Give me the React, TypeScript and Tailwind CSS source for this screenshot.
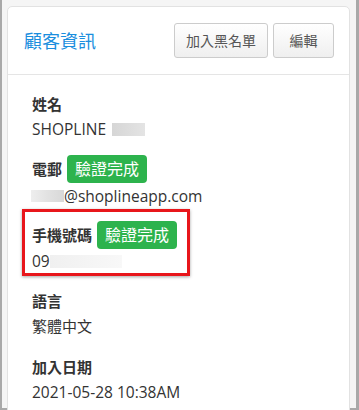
import React from "react";

const font = { fontFamily: '"Open Sans", "Noto Sans CJK TC", sans-serif' };

function Badge() {
  return (
    <span className="inline-flex h-[28px] items-center rounded-[4px] bg-[#2db34d] px-[8px] text-[16px] leading-none text-white">
      驗證完成
    </span>
  );
}

export default function App() {
  return (
    <div
      className="h-[410px] w-[359px] overflow-hidden bg-[#a9a9a9] pl-[2px] pr-[3px] pb-[2px]"
      style={font}
    >
      <div className="h-[408px] bg-[#f5f5f5] pt-[6px] pl-[5px] pr-[6px]">
        <div className="h-[420px] rounded-[5px] border border-[#e2e2e2] bg-white">
          {/* header */}
          <div className="flex h-[68px] items-center justify-between border-b border-[#e5e5e5] pl-[16px] pr-[15px]">
            <div className="text-[18px] leading-none text-[#1a8ede]">顧客資訊</div>
            <div className="flex gap-[5px]">
              <button className="h-[35px] w-[94px] rounded-[3px] border border-[#cccccc] bg-gradient-to-b from-white to-[#efefef] text-[14px] text-[#555]">
                加入黑名單
              </button>
              <button className="h-[35px] w-[61px] rounded-[3px] border border-[#cccccc] bg-gradient-to-b from-white to-[#efefef] text-[14px] text-[#555]">
                編輯
              </button>
            </div>
          </div>

          {/* body */}
          <div className="pl-[24px] pt-[17px] text-[15px] text-[#333]">
            <div className="mb-[13px]">
              <div className="h-[24px] font-bold leading-[24px]">姓名</div>
              <div className="flex h-[26px] items-center text-[15.5px] leading-[26px]">
                SHOPLINE
                <span className="ml-[6px] inline-block h-[13px] w-[33px] bg-gradient-to-r from-[#d6d6d6] to-[#e4e4e4]" />
              </div>
            </div>

            <div>
              <div className="flex h-[28px] items-center gap-[5px]">
                <span className="font-bold leading-[24px]">電郵</span>
                <Badge />
              </div>
              <div className="flex h-[26px] items-center text-[15.5px] leading-[26px]">
                <span className="-ml-[1px] inline-block h-[12px] w-[33px] bg-gradient-to-r from-[#eeeeee] via-[#e2e2e2] to-[#d8d8d8]" />
                @shoplineapp.com
              </div>
            </div>

            <div className="-ml-[10px] w-[168px] border-[3px] border-[#e8161b] pl-[7px] pt-[9px] shadow-[0_1px_3px_rgba(0,0,0,0.35)]">
              <div className="flex h-[28px] items-center gap-[5px]">
                <span className="font-bold leading-[24px]">手機號碼</span>
                <Badge />
              </div>
              <div className="flex h-[24px] items-center text-[15.5px] leading-[24px]">
                09
                <span className="inline-block h-[13px] w-[72px] bg-gradient-to-r from-[#f0f0f0] to-[#f8f8f8]" />
              </div>
            </div>

            <div className="mt-[13px] mb-[16px]">
              <div className="h-[24px] font-bold leading-[24px]">語言</div>
              <div className="h-[26px] leading-[26px]">繁體中文</div>
            </div>

            <div>
              <div className="h-[24px] font-bold leading-[24px]">加入日期</div>
              <div className="h-[26px] text-[15.5px] leading-[26px]">2021-05-28 10:38AM</div>
            </div>
          </div>
        </div>
      </div>
    </div>
  );
}
